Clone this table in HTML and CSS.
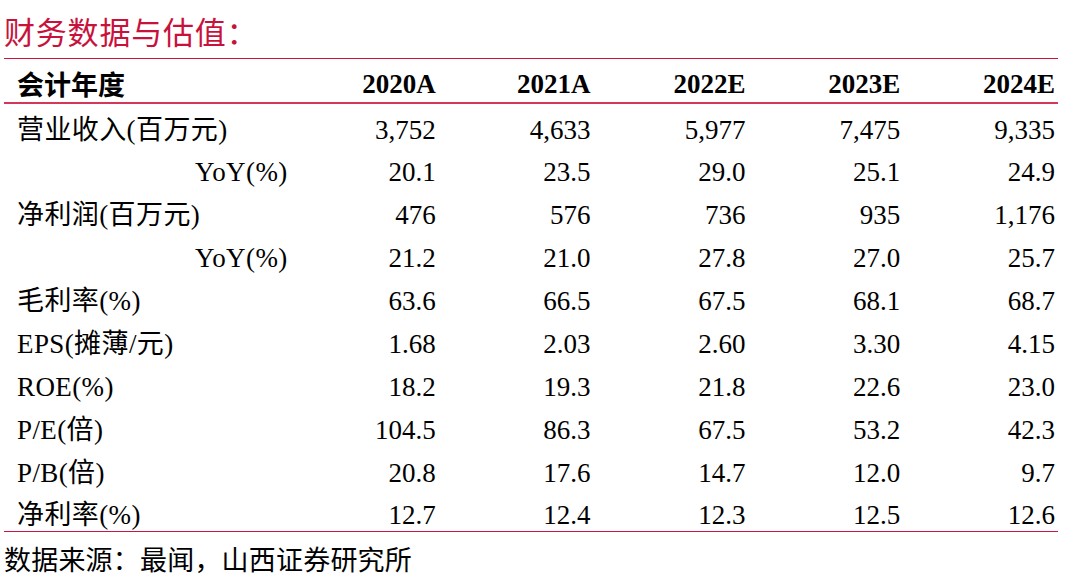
FILE: index.html
```html
<!DOCTYPE html>
<html lang="zh">
<head>
<meta charset="utf-8">
<title>财务数据与估值</title>
<link rel="stylesheet" href="styles.css">
</head>
<body>
<div class="page">
  <h1 class="title">财务数据与估值：</h1>
  <table class="fin">
    <colgroup>
      <col class="c-label">
      <col class="c-num"><col class="c-num"><col class="c-num"><col class="c-num"><col class="c-num">
    </colgroup>
    <thead>
      <tr>
        <th class="label">会计年度</th>
        <th>2020A</th><th>2021A</th><th>2022E</th><th>2023E</th><th>2024E</th>
      </tr>
    </thead>
    <tbody>
      <tr><td class="label">营业收入(百万元)</td><td>3,752</td><td>4,633</td><td>5,977</td><td>7,475</td><td>9,335</td></tr>
      <tr><td class="label indent">YoY(%)</td><td>20.1</td><td>23.5</td><td>29.0</td><td>25.1</td><td>24.9</td></tr>
      <tr><td class="label">净利润(百万元)</td><td>476</td><td>576</td><td>736</td><td>935</td><td>1,176</td></tr>
      <tr><td class="label indent">YoY(%)</td><td>21.2</td><td>21.0</td><td>27.8</td><td>27.0</td><td>25.7</td></tr>
      <tr><td class="label">毛利率(%)</td><td>63.6</td><td>66.5</td><td>67.5</td><td>68.1</td><td>68.7</td></tr>
      <tr><td class="label">EPS(摊薄/元)</td><td>1.68</td><td>2.03</td><td>2.60</td><td>3.30</td><td>4.15</td></tr>
      <tr><td class="label">ROE(%)</td><td>18.2</td><td>19.3</td><td>21.8</td><td>22.6</td><td>23.0</td></tr>
      <tr><td class="label">P/E(倍)</td><td>104.5</td><td>86.3</td><td>67.5</td><td>53.2</td><td>42.3</td></tr>
      <tr><td class="label">P/B(倍)</td><td>20.8</td><td>17.6</td><td>14.7</td><td>12.0</td><td>9.7</td></tr>
      <tr><td class="label">净利率(%)</td><td>12.7</td><td>12.4</td><td>12.3</td><td>12.5</td><td>12.6</td></tr>
    </tbody>
  </table>
  <p class="source">数据来源：最闻，山西证券研究所</p>
</div>
</body>
</html>
```

FILE: styles.css
```css
html, body {
  margin: 0;
  padding: 0;
  background: #ffffff;
}

.page {
  width: 1054px;
  padding-left: 4px;
  font-family: "Liberation Serif", "Noto Sans CJK SC", serif;
  color: #000000;
}

.title {
  margin: 0;
  height: 58px;
  box-sizing: border-box;
  padding: 2px 0 0 0;
  display: flex;
  align-items: center;
  font-family: "Noto Sans CJK SC", sans-serif;
  font-weight: 400;
  font-size: 31px;
  line-height: 1;
  color: #c8123c;
  letter-spacing: 0.8px;
}

.fin {
  width: 1054px;
  border-collapse: collapse;
  table-layout: fixed;
  border-top: 1px solid #cc1440;
  border-bottom: 1px solid #cc1440;
}

.c-label { width: 280px; }
.c-num { width: 154.8px; }

.fin th,
.fin td {
  box-sizing: border-box;
  padding: 0 3px 0 0;
  text-align: right;
  font-size: 27px;
  line-height: 1;
  white-space: nowrap;
  vertical-align: middle;
}

.fin thead th {
  height: 44px;
  font-weight: 700;
  border-bottom: 2px solid #d4375a;
  padding-top: 9px;
}

.fin tbody td {
  height: 42.9px;
  padding-top: 12px;
  font-weight: 400;
}

.fin .label {
  text-align: left;
  padding-left: 13px;
  font-family: "Liberation Serif", "Noto Sans CJK SC", serif;
}

.fin tbody .label {
  letter-spacing: 0.4px;
}

.fin thead .label {
  font-family: "Noto Sans CJK SC", sans-serif;
  font-weight: 700;
  font-size: 27px;
  padding-top: 7px;
}

.fin .indent {
  padding-left: 191px;
  letter-spacing: 0;
}

.source {
  margin: 0;
  height: 52px;
  box-sizing: border-box;
  padding: 2px 0 0 0;
  display: flex;
  align-items: center;
  font-family: "Noto Sans CJK SC", sans-serif;
  font-size: 27px;
  letter-spacing: 0.2px;
  line-height: 1;
}
```
